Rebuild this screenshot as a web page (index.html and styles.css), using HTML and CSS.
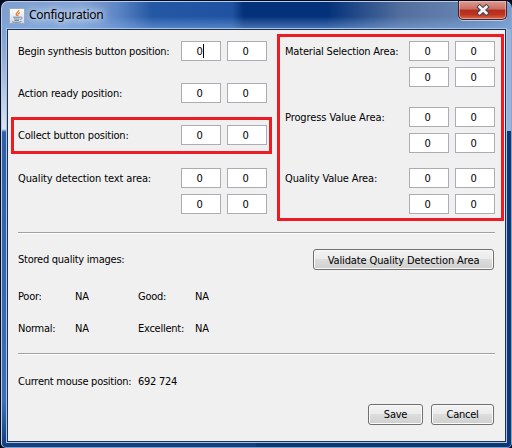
FILE: index.html
```html
<!DOCTYPE html>
<html lang="en">
<head>
<meta charset="utf-8">
<title>Configuration</title>
<link rel="stylesheet" href="styles.css">
</head>
<body>
<div class="window">
  <header class="titlebar">
    <svg class="app-icon" viewBox="0 0 16 16" width="16" height="16">
      <defs><linearGradient id="tile" x2="0" y2="1"><stop offset="0" stop-color="#fff"/><stop offset="1" stop-color="#d3d8df"/></linearGradient></defs>
      <rect x=".5" y=".5" width="15" height="15" fill="url(#tile)" stroke="#9aa9bd"/>
      <path d="M9.8 2C10.4 4 5.4 4.6 7.8 8M11 4.6C7.8 5.4 9.8 6.7 8.5 8.2" fill="none" stroke="#ef8233" stroke-width="1.2"/>
      <path d="M4 9.2h7M5 11h5.4M5.5 12.5h4.3M3 13.8c3 .8 7 .8 9.5-.3M11 9.2c3-.7 2.6 1.8.2 2.2" fill="none" stroke="#587f9e" stroke-width=".9"/>
    </svg>
    <h1 class="title">Configuration</h1>
    <button class="close" aria-label="Close">
      <svg viewBox="0 0 14 12" width="14" height="12"><path d="M3.7 3 10.3 9M10.3 3 3.7 9" stroke="#4b4555" stroke-width="4.8" stroke-linecap="square"/><path d="M3.7 3 10.3 9M10.3 3 3.7 9" stroke="#f4f4f4" stroke-width="2.7" stroke-linecap="square"/></svg>
    </button>
  </header>
  <main class="client">
    <section class="areas">
      <div class="positions">
        <div class="row"><span class="label l-begin">Begin synthesis button position:</span><div class="fields"><span class="field focus">0</span><span class="field">0</span></div></div>
        <div class="row"><span class="label l-action">Action ready position:</span><div class="fields"><span class="field">0</span><span class="field">0</span></div></div>
        <div class="row marked"><span class="label l-collect">Collect button position:</span><div class="fields"><span class="field">0</span><span class="field">0</span></div></div>
        <div class="row last"><span class="label l-detect">Quality detection text area:</span><div class="fields"><span class="field">0</span><span class="field">0</span><span class="field">0</span><span class="field">0</span></div></div>
      </div>
      <div class="regions">
        <div class="row"><span class="label l-material">Material Selection Area:</span><div class="fields"><span class="field">0</span><span class="field">0</span><span class="field">0</span><span class="field">0</span></div></div>
        <div class="row"><span class="label l-progress">Progress Value Area:</span><div class="fields"><span class="field">0</span><span class="field">0</span><span class="field">0</span><span class="field">0</span></div></div>
        <div class="row"><span class="label l-value">Quality Value Area:</span><div class="fields"><span class="field">0</span><span class="field">0</span><span class="field">0</span><span class="field">0</span></div></div>
      </div>
    </section>
    <hr>
    <section class="stored">
      <span class="l-stored">Stored quality images:</span>
      <button class="btn validate">Validate Quality Detection Area</button>
    </section>
    <section class="images">
      <span>Poor:</span><span>NA</span><span>Good:</span><span>NA</span>
      <span>Normal:</span><span>NA</span><span>Excellent:</span><span>NA</span>
    </section>
    <hr>
    <section class="mouse"><span class="l-mouse">Current mouse position:</span><span>692 724</span></section>
    <footer class="actions"><button class="btn save">Save</button><button class="btn cancel">Cancel</button></footer>
  </main>
</div>
</body>
</html>
```
FILE: styles.css
```css
* { box-sizing: border-box; }
body {
  margin: 0;
  width: 512px;
  height: 448px;
  overflow: hidden;
  background: #050b20;
  color: #000;
  font: 11px/14px "DejaVu Sans Condensed", "DejaVu Sans", sans-serif;
  font-stretch: condensed;
  letter-spacing: -0.25px;
}
.window {
  width: 511px;
  height: 447px;
  margin: 1px 0 0 1px;
  padding: 0 4px 4px 5px;
  border: 1px solid #b9cde8;
  border-right-color: #87a6cf;
  border-bottom-color: #7fa0cb;
  border-radius: 7px 7px 5px 5px;
  background:
    linear-gradient(90deg, #7e9fd0 0, #84a3d4 80px, #5d86c5 115px, #2458a5 150px, #1f53a1 230px, #03317a 242px, #03317a 325px, #536f9e 400px, #6d8cba 490px, #7b9bcc 100%) 0 0 / 100% 27px no-repeat,
    linear-gradient(90deg, transparent 50%, #0b3775 50%) 0 129px / 100% 330px no-repeat,
    linear-gradient(90deg, transparent 50%, #9ab3da 50%) 0 27px / 100% 102px no-repeat,
    linear-gradient(#7899cc 0, #8daad6 50px, #dbe4f2 127px, #2e5fa8 130px, #3c6fb7 400px, #12407f 443px);
}
.titlebar {
  height: 26px;
  display: flex;
  align-items: flex-start;
  margin: 0 -4px 0 -5px;
  padding-left: 7px;
  background: linear-gradient(transparent 55%, rgba(130, 174, 230, .5));
}
.app-icon { margin-top: 6px; }
.title {
  flex: 1;
  margin: 4px 0 0 4px;
  font: 12px/18px "Noto Sans", sans-serif;
  letter-spacing: -.26px;
  text-shadow: 0 0 6px #dce8fa, 0 0 9px #c5d7f1, 0 0 12px #c5d7f1;
}
.close {
  width: 49px;
  height: 19px;
  margin: -1px 4px 0 0;
  padding: 0;
  display: flex;
  align-items: center;
  justify-content: center;
  border: 1px solid #3c2436;
  border-top: 0;
  border-radius: 0 0 5px 5px;
  background: linear-gradient(#dc9c91, #cc6d60 45%, #b22c1c 50%, #bd3421 75%, #dc6a49);
  box-shadow: inset 0 0 0 1px rgba(255, 210, 200, .5), 0 1px 0 #b8cceb;
}
.client {
  width: 499px;
  height: 413px;
  margin-top: 1px;
  padding: 4px 0 0 3px;
  border: 1px solid #1d3052;
  background: #f0f0f0;
  box-shadow: 0 0 0 1px #a9c4e2;
}
.areas { display: grid; grid-template-columns: 261px 227px; gap: 5px; height: 187px; }
.row { display: flex; align-items: flex-start; }
.label { line-height: 22px; height: 20px; white-space: nowrap; flex: none; }
.fields { display: grid; grid-template-columns: 40px 40px; gap: 6px; }
.field {
  height: 20px;
  border: 1px solid #abadb3;
  background: #fff;
  text-align: center;
  line-height: 20px;
  padding-right: 3px;
}
.focus::after { content: ""; display: inline-block; width: 1px; height: 14px; margin-right: -1px; background: #000; vertical-align: -3px; }
.positions .row { height: 41px; padding: 7px 0 0 7px; }
.positions .row:first-child { height: 42px; }
.positions .label { width: 163px; }
.positions .marked { height: 37px; padding: 5px 0 0 4px; border: 3px solid #ed1c24; }
.positions .last { padding-top: 14px; }
.regions { height: 187px; border: 3px solid #ed1c24; padding: 4px 0 0 5px; }
.regions .row { height: 66px; }
.regions .row:nth-child(2) { height: 61px; }
.regions .row:last-child { height: 46px; }
.regions .label { width: 124px; }
.label.l-action { letter-spacing: -.17px; }
.label.l-collect { letter-spacing: -.2px; }
.label.l-detect { letter-spacing: -.12px; }
.label.l-material { letter-spacing: -.2px; }
.label.l-progress { letter-spacing: -.1px; }
.label.l-value { letter-spacing: -.14px; }
hr { width: 477px; height: 2px; margin: 11px 0 0 7px; border: 0; border-top: 1px solid #a0a0a0; border-bottom: 1px solid #fff; }
.stored { display: flex; justify-content: space-between; margin: 15px 11px 0 7px; line-height: 21px; }
.btn {
  height: 21px;
  padding: 0;
  border: 1px solid #707070;
  border-radius: 3px;
  background: linear-gradient(#f3f3f3, #ebebeb 48%, #dddddd 50%, #cfcfcf);
  box-shadow: inset 0 0 0 1px #fafafa;
  color: #000;
  font: inherit;
  letter-spacing: inherit;
}
.validate { width: 181px; letter-spacing: -.12px; }
.images { display: grid; grid-template-columns: 57px 63px 57px auto; grid-auto-rows: 14px; row-gap: 18px; margin: 20px 0 0 7px; }
.images + hr { margin-top: 17px; }
.mouse { display: grid; grid-template-columns: 120px auto; margin: 20px 0 0 7px; }
.actions { display: flex; justify-content: flex-end; gap: 8px; margin: 15px 11px 0 0; }
.save { width: 55px; }
.cancel { width: 63px; }
```
